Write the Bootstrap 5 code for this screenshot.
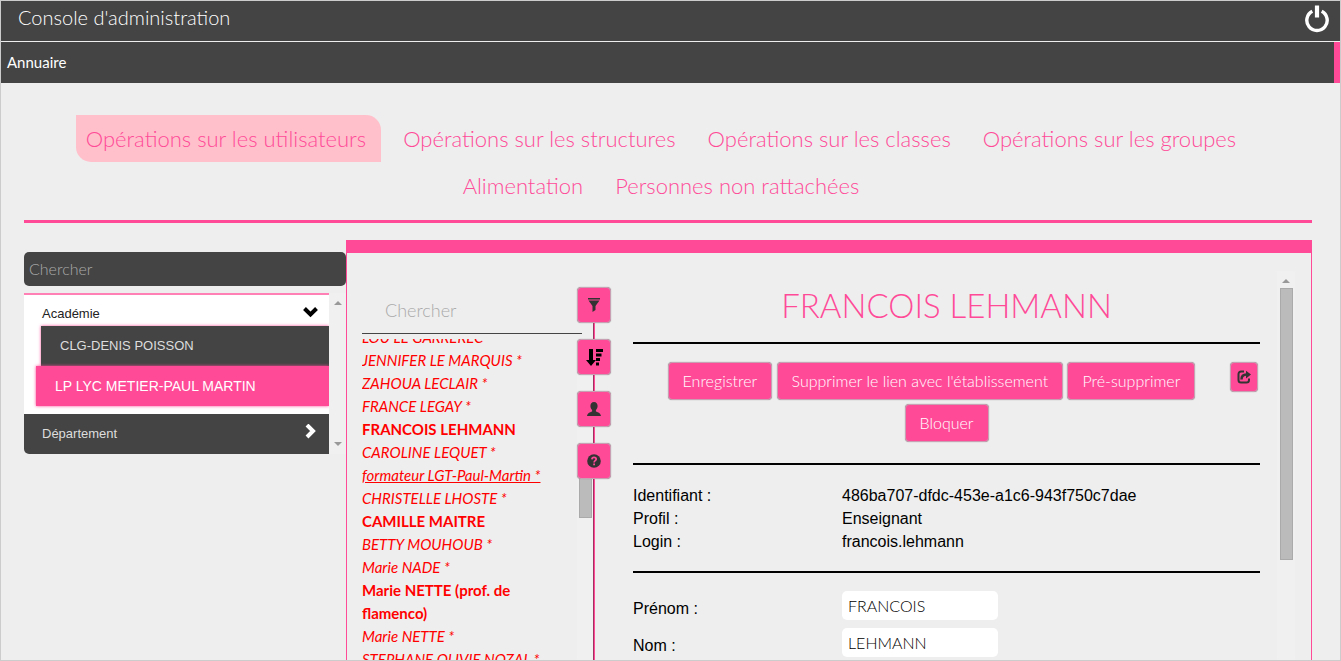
<!DOCTYPE html>
<html lang="fr">
<head>
<meta charset="utf-8">
<meta name="viewport" content="width=device-width, initial-scale=1">
<title>Console d'administration</title>
<link href="https://cdn.jsdelivr.net/npm/bootstrap@5.3.0/dist/css/bootstrap.min.css" rel="stylesheet">
<style>
:root { --pink: #ff4a98; --dark: #444; --page: #eee; }
body { font-family: Lato, sans-serif; background: var(--page); color: #000; font-weight: 300; }
.frame { height: 100vh; border: 1px solid #ccc; }
.topbar { height: 40px; background: var(--dark); color: #fff; padding: 0 11px 4px 17px; }
.topbar h1 { font-size: 20px; font-weight: 300; line-height: 28px; padding-bottom: 4px; }
.subbar { height: 41px; background: var(--dark); border-right: 6px solid var(--pink); padding-left: 6px; margin-top: 1px; }
.subbar a { color: #fff; font-size: 15px; font-weight: 400; }
.plain { background: none; border: 0; padding: 0; }
.page-body { padding: 32px 28px 0 23px; }
.ops { padding-right: 14px; column-gap: 12px; }
.ops a { color: var(--pink); font-size: 22px; line-height: 47px; padding: 0 10px; font-weight: 300; white-space: nowrap; }
.ops a.active { background: #ffc0cb; border-radius: 0 15px 0 15px; padding-right: 15px; }
.rule-pink { height: 3px; background: var(--pink); margin: 11px 0 17px; }
.side { padding-top: 12px; font-family: "Liberation Sans", sans-serif; font-size: 13px; font-weight: 400; }
.side-search { height: 34px; background: var(--dark); border: 0; border-radius: 5px; color: #fff; font: 300 16px Lato, sans-serif; padding: 0 5px 2px; }
::placeholder { color: #aaa !important; opacity: 1; }
.tree { margin-top: 7px; }
.tree-list { background: #fff; border-top: 2px solid #ff80b5; border-radius: 0 0 0 5px; overflow: hidden; }
.tree button { width: 100%; text-align: left; height: 40px; color: #ddd; background: var(--dark); }
.tree .root { display: flex; justify-content: space-between; align-items: center; padding: 0 11px 0 18px; }
.tree .open { background: #fff; color: #222; height: 31px; padding-top: 6px; }
.tree .school { margin-left: 17px; width: auto; flex: 1; padding-left: 19px; font-size: 13px; box-shadow: 0 0 3px var(--pink); }
.tree .picked { margin-left: 12px; background: var(--pink); color: #fff; font-size: 14px; }
.bar { width: 17px; background: #f0f0f0; flex: none; }
.arrow-up, .arrow-down { width: 0; border: 4px solid transparent; }
.arrow-up { border-bottom-color: #999; border-top: 0; }
.arrow-down { border-top-color: #999; border-bottom: 0; }
.thumb { width: 13px; background: #bbb; border: 1px solid #aaa; }
.panel { border: solid var(--pink); border-width: 13px 1px 0 1px; min-height: 0; }
.people { width: 232px; margin-left: 15px; padding-top: 34px; flex: none; }
.people-search { width: 220px; height: 47px; border: 0; border-bottom: 1px solid #444; background: none; font-size: 18px; font-weight: 300; padding: 0 23px; flex: none; }
.people-list { margin-top: 5px; overflow: hidden; min-height: 0; }
.people-list ul { margin-top: -13px; font-size: 15px; line-height: 23px; }
.people-list a { color: #f00; font-style: italic; font-weight: 400; text-decoration: none; }
.people-list a.full { font-style: normal; font-weight: 700; }
.people-list a.hovered { text-decoration: underline; }
.people-thumb { height: 40px; margin-top: 139px; }
.tools { width: 34px; margin-left: -17px; padding-top: 34px; gap: 16px; flex: none; z-index: 1;
  background: linear-gradient(to right, #a03060, #a03060 1px, var(--pink) 1px) center 34px / 2px 100% no-repeat; }
.pink-btn { background: var(--pink); border: 1px solid #c9a0b3; border-radius: 4px; color: #fff; box-shadow: 0 0 1px #888; }
.tools .pink-btn { width: 34px; height: 36px; padding: 0; display: flex; align-items: center; justify-content: center; }
.detail { padding: 0 17px 0 22px; }
.detail h2 { color: var(--pink); font-size: 33px; line-height: 42px; font-weight: 300; padding-top: 31px; margin: 0 0 16px; }
.rule { height: 2px; background: #000; }
.actions { padding: 18px 0 17px; line-height: 42px; }
.actions .pink-btn { height: 38px; font-size: 16px; font-weight: 300; line-height: 24px; padding: 0 14px; vertical-align: top; margin-bottom: 4px; }
.actions .share { width: 28px; height: 30px; padding: 0; margin-right: 2px; display: flex; align-items: center; justify-content: center; }
.info { font-family: "Liberation Sans", sans-serif; font-size: 16px; font-weight: 400; line-height: 23px; padding: 19px 0 18px; }
.fields { padding-top: 18px; font-family: "Liberation Sans", sans-serif; font-weight: 400; }
.fields .row { margin-bottom: 8px; }
.fields label { line-height: 36px; height: 29px; }
.fields input { width: 156px; height: 29px; border: 0; border-radius: 5px; font: 300 16px Lato, sans-serif; padding: 0 6px; color: #000; }
.detail-bar { width: 18px; margin: 18px 16px 0 0; padding-top: 8px; }
.detail-thumb { height: 272px; margin-top: 5px; }
</style>
</head>
<body>
<div class="frame d-flex flex-column overflow-hidden">
  <header class="topbar d-flex justify-content-between align-items-center flex-shrink-0">
    <h1 class="m-0">Console d'administration</h1>
    <button class="plain d-flex" type="button" aria-label="Se déconnecter">
      <svg width="24" height="28" viewBox="0 0 24 28" fill="none" stroke="#fff" stroke-width="3.4"><path d="M7.3 6.3a10.2 10.2 0 1 0 9.4 0"/><path d="M12 .5v12" stroke-width="4.2"/></svg>
    </button>
  </header>
  <nav class="subbar d-flex align-items-center flex-shrink-0"><a class="text-decoration-none" href="#">Annuaire</a></nav>

  <main class="page-body d-flex flex-column flex-grow-1 overflow-hidden">
    <nav class="ops d-flex flex-wrap justify-content-center flex-shrink-0">
      <a class="active text-decoration-none" href="#">Opérations sur les utilisateurs</a>
      <a class="text-decoration-none" href="#">Opérations sur les structures</a>
      <a class="text-decoration-none" href="#">Opérations sur les classes</a>
      <a class="text-decoration-none" href="#">Opérations sur les groupes</a>
      <a class="text-decoration-none" href="#">Alimentation</a>
      <a class="text-decoration-none" href="#">Personnes non rattachées</a>
    </nav>
    <div class="rule-pink flex-shrink-0"></div>

    <div class="row g-0 flex-grow-1 overflow-hidden">
      <aside class="side col-3">
        <input class="side-search w-100 d-block" type="text" placeholder="Chercher" aria-label="Chercher une structure">
        <div class="tree d-flex">
          <div class="tree-list flex-grow-1">
            <button class="plain root open" type="button">Académie
              <svg width="15" height="14" viewBox="0 0 15 14" fill="none" stroke="#000" stroke-width="4"><path d="M1.5 1.500l6 6 6-6"/></svg>
            </button>
            <div class="d-flex"><button class="plain school" type="button">CLG-DENIS POISSON</button></div>
            <div class="d-flex mb-2"><button class="plain school picked" type="button">LP LYC METIER-PAUL MARTIN</button></div>
            <button class="plain root" type="button">Département
              <svg width="15" height="20" viewBox="0 0 15 20" fill="none" stroke="#fff" stroke-width="4"><path d="M4 1l6 6-6 6"/></svg>
            </button>
          </div>
          <div class="bar d-flex flex-column justify-content-between align-items-center py-2"><span class="arrow-up"></span><span class="arrow-down"></span></div>
        </div>
      </aside>

      <section class="panel col-9 d-flex h-100">
        <div class="people d-flex flex-column">
          <input class="people-search" type="text" placeholder="Chercher" aria-label="Chercher une personne">
          <div class="people-list d-flex flex-grow-1">
            <ul class="list-unstyled flex-grow-1">
              <li><a href="#">LOU LE GARREREC</a></li>
              <li><a href="#">JENNIFER LE MARQUIS *</a></li>
              <li><a href="#">ZAHOUA LECLAIR *</a></li>
              <li><a href="#">FRANCE LEGAY *</a></li>
              <li><a class="full" href="#">FRANCOIS LEHMANN</a></li>
              <li><a href="#">CAROLINE LEQUET *</a></li>
              <li><a class="hovered" href="#">formateur LGT-Paul-Martin *</a></li>
              <li><a href="#">CHRISTELLE LHOSTE *</a></li>
              <li><a class="full" href="#">CAMILLE MAITRE</a></li>
              <li><a href="#">BETTY MOUHOUB *</a></li>
              <li><a href="#">Marie NADE *</a></li>
              <li><a class="full" href="#">Marie NETTE (prof. de<br>flamenco)</a></li>
              <li><a href="#">Marie NETTE *</a></li>
              <li><a href="#">STEPHANE OLIVIE NOZAL *</a></li>
            </ul>
            <div class="bar d-flex justify-content-center"><span class="thumb people-thumb"></span></div>
          </div>
        </div>

        <div class="tools d-flex flex-column">
          <button class="pink-btn" type="button" aria-label="Filtrer"><svg width="12" height="14" viewBox="0 0 12 14" fill="#333"><path d="M0 0h12v1.500H0zM.5 2.500h11L7.500 8v4l-3 2V8z"/></svg></button>
          <button class="pink-btn" type="button" aria-label="Trier"><svg width="17" height="17" viewBox="0 0 17 17" fill="#000"><path d="M3 0h4v11h3l-5 6-5-6h3zM10 0h7v3h-7zM10 4.500h5.500v3H10zM10 9h4v3h-4zM10 13.500h3v3h-3z"/></svg></button>
          <button class="pink-btn" type="button" aria-label="Compte"><svg width="14" height="14" viewBox="0 0 14 14" fill="#333"><path d="M7 0c2.400 0 3.600 1.700 3.600 4 0 1.800-.8 3.200-1.700 4v1.500c2.400 1 4.600 1.500 5.100 4.500H0c.5-3 2.700-3.500 5.100-4.500V8c-.9-.8-1.700-2.200-1.700-4C3.400 1.700 4.600 0 7 0z"/></svg></button>
          <button class="pink-btn" type="button" aria-label="Aide"><svg width="14" height="14" viewBox="0 0 14 14"><circle cx="7" cy="7" r="6.800" fill="#333"/><path d="M4.900 5.400C5 3.900 5.900 3.400 7 3.400c1.300 0 2.200.7 2.200 1.800C9.200 6.600 7.100 6.700 7.100 8.400" fill="none" stroke="#ff4a98" stroke-width="1.700"/><path d="M6.200 9.500h1.800v1.700H6.200z" fill="#ff4a98"/></svg></button>
        </div>

        <div class="detail flex-grow-1">
          <h2 class="text-center">FRANCOIS LEHMANN</h2>
          <div class="rule"></div>
          <div class="actions text-center">
            <button class="pink-btn share float-end" type="button" aria-label="Partager"><svg width="14" height="14" viewBox="0 0 14 14" fill="none" stroke="#333" stroke-width="2"><path d="M7 1.500H4A2.500 2.500 0 0 0 1.500 4v6A2.500 2.500 0 0 0 4 12.500h5.500A2.500 2.500 0 0 0 12 10V8.500"/><path d="M4.500 9.500C4.500 6 6 4.500 9.500 4.500" stroke-width="2.500"/><path d="M9 .8L14 4.600 9 8.500z" fill="#333" stroke="none"/></svg></button>
            <button class="pink-btn" type="button">Enregistrer</button>
            <button class="pink-btn" type="button">Supprimer le lien avec l'établissement</button>
            <button class="pink-btn" type="button">Pré-supprimer</button>
            <button class="pink-btn" type="button">Bloquer</button>
          </div>
          <div class="rule"></div>
          <dl class="info row g-0 m-0">
            <dt class="col-4 fw-normal">Identifiant :</dt><dd class="col-8 m-0">486ba707-dfdc-453e-a1c6-943f750c7dae</dd>
            <dt class="col-4 fw-normal">Profil :</dt><dd class="col-8 m-0">Enseignant</dd>
            <dt class="col-4 fw-normal">Login :</dt><dd class="col-8 m-0">francois.lehmann</dd>
          </dl>
          <div class="rule"></div>
          <form class="fields">
            <div class="row g-0"><label class="col-4" for="prenom">Prénom :</label><div class="col-8 d-flex"><input id="prenom" type="text" value="FRANCOIS"></div></div>
            <div class="row g-0"><label class="col-4" for="nom">Nom :</label><div class="col-8 d-flex"><input id="nom" type="text" value="LEHMANN"></div></div>
          </form>
        </div>
        <div class="bar detail-bar d-flex flex-column align-items-center"><span class="arrow-up"></span><span class="thumb detail-thumb"></span></div>
      </section>
    </div>
  </main>
</div>
<script src="https://cdn.jsdelivr.net/npm/bootstrap@5.3.0/dist/js/bootstrap.bundle.min.js"></script>
</body>
</html>
